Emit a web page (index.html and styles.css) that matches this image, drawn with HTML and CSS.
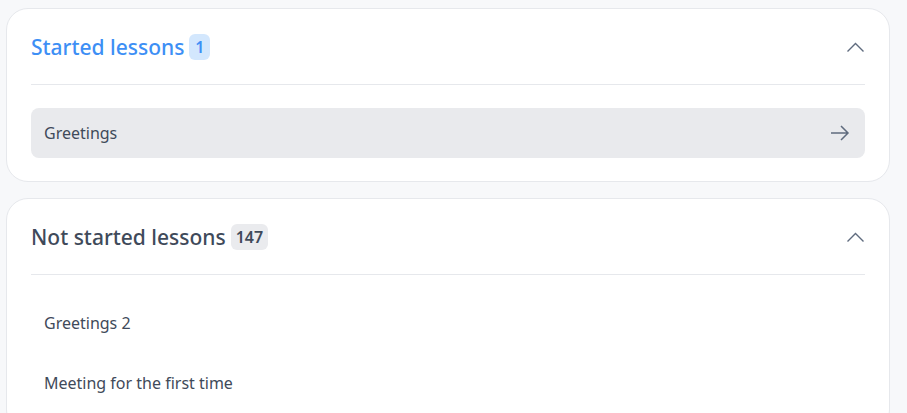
FILE: index.html
```html
<!doctype html>
<html>
<head>
    <title>Lessons</title>
    <link rel="stylesheet" href="styles.css">
</head>

<body>
    <div class="page">
        <section class="card">
            <div class="card-head">
                <h2 class="title title-active">Started lessons <span class="badge badge-blue">1</span></h2>
                <svg class="chevron" width="17" height="10" viewBox="0 0 17 10"><path d="M0.5 9.5L8.5 1.5L16.5 9.5" fill="none" stroke="#5f6b7e" stroke-width="1.4"/></svg>
            </div>
            <div class="lessons">
                <div class="lesson lesson-started">
                    <span>Greetings</span>
                    <svg class="arrow" width="20" height="16" viewBox="0 0 20 16"><path d="M1 8H18M11 1L18 8L11 15" fill="none" stroke="#5f6b7e" stroke-width="1.5"/></svg>
                </div>
            </div>
        </section>

        <section class="card">
            <div class="card-head">
                <h2 class="title">Not started lessons <span class="badge">147</span></h2>
                <svg class="chevron" width="17" height="10" viewBox="0 0 17 10"><path d="M0.5 9.5L8.5 1.5L16.5 9.5" fill="none" stroke="#5f6b7e" stroke-width="1.4"/></svg>
            </div>
            <div class="lessons">
                <div class="lesson"><span>Greetings 2</span></div>
                <div class="lesson"><span>Meeting for the first time</span></div>
            </div>
        </section>
    </div>
</body>
</html>
```

FILE: styles.css
```css
body {
    margin: 0;
    background-color: #f7f8fa;
    font-family: "Noto Sans", sans-serif;
    color: #3f4a5a;
}
.page {
    width: 884px;
    margin-left: 6px;
    padding-top: 8px;
    display: flex;
    flex-direction: column;
    gap: 16px;
}
.card {
    background-color: #ffffff;
    border: 1px solid #e6e8ec;
    border-radius: 22px;
    padding: 0 24px 23px 24px;
}
.card-head {
    display: flex;
    align-items: center;
    justify-content: space-between;
    height: 75px;
    border-bottom: 1px solid #e6e8ec;
}
.title {
    margin: 0;
    font-size: 21px;
    font-weight: 500;
    color: #3f4a5a;
    display: flex;
    align-items: center;
    gap: 5px;
}
.title-active {
    color: #3d8ff5;
}
.badge {
    display: inline-block;
    min-width: 11px;
    text-align: center;
    font-size: 16px;
    font-weight: 600;
    padding: 0 5px;
    line-height: 26px;
    border-radius: 6px;
    background-color: #eaebee;
    color: #3f4a5a;
}
.badge-blue {
    background-color: #d3e7fd;
    color: #3d8ff5;
}
.chevron {
    margin-right: 1px;
}
.lessons {
    display: flex;
    flex-direction: column;
    gap: 10px;
    padding-top: 23px;
}
.lesson {
    height: 50px;
    display: flex;
    align-items: center;
    justify-content: space-between;
    padding: 0 15px 0 13px;
    border-radius: 8px;
    font-size: 16px;
    color: #3f4a5a;
}
.lesson-started {
    background-color: #e9eaed;
}
```
